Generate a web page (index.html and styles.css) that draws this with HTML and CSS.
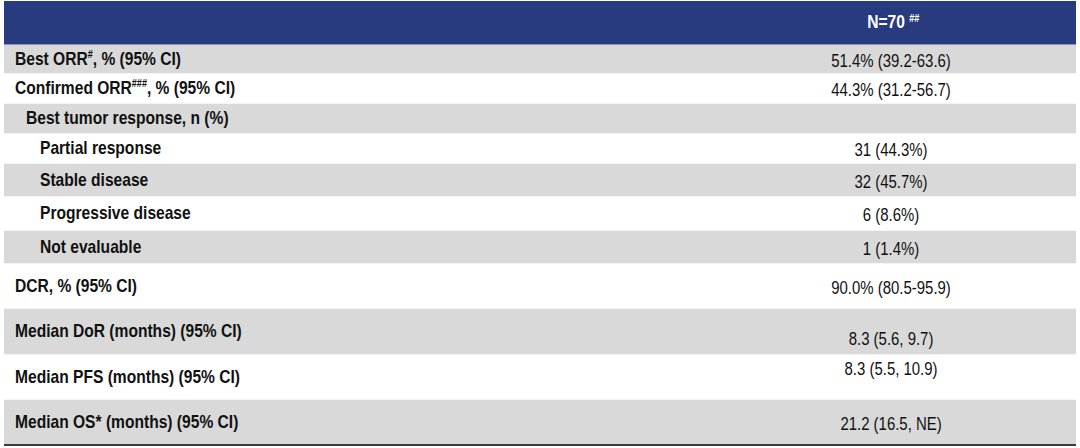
FILE: index.html
```html
<!DOCTYPE html>
<html lang="en">
<head>
<meta charset="utf-8">
<title>Efficacy table</title>
<link rel="stylesheet" href="styles.css">
</head>
<body>
<table class="efficacy">
  <colgroup><col class="col-label"><col class="col-value"></colgroup>
  <thead>
    <tr class="head"><th></th><th><span class="t">N=70 <sup>##</sup></span></th></tr>
  </thead>
  <tbody>
    <tr class="gray h29"><td class="lbl"><span class="t">Best ORR<sup>#</sup>, % (95% CI)</span></td><td class="val"><span class="t">51.4% (39.2-63.6)</span></td></tr>
    <tr class="h30"><td class="lbl"><span class="t">Confirmed ORR<sup>###</sup>, % (95% CI)</span></td><td class="val"><span class="t">44.3% (31.2-56.7)</span></td></tr>
    <tr class="gray h30"><td class="lbl ind1"><span class="t">Best tumor response, n (%)</span></td><td class="val"></td></tr>
    <tr class="h30"><td class="lbl ind2"><span class="t">Partial response</span></td><td class="val"><span class="t">31 (44.3%)</span></td></tr>
    <tr class="gray h33"><td class="lbl ind2"><span class="t">Stable disease</span></td><td class="val"><span class="t">32 (45.7%)</span></td></tr>
    <tr class="h34"><td class="lbl ind2"><span class="t">Progressive disease</span></td><td class="val"><span class="t">6 (8.6%)</span></td></tr>
    <tr class="gray h33"><td class="lbl ind2"><span class="t">Not evaluable</span></td><td class="val"><span class="t">1 (1.4%)</span></td></tr>
    <tr class="h45"><td class="lbl"><span class="t">DCR, % (95% CI)</span></td><td class="val"><span class="t">90.0% (80.5-95.9)</span></td></tr>
    <tr class="gray h46"><td class="lbl"><span class="t">Median DoR (months) (95% CI)</span></td><td class="val low"><span class="t">8.3 (5.6, 9.7)</span></td></tr>
    <tr class="h45"><td class="lbl"><span class="t">Median PFS (months) (95% CI)</span></td><td class="val high"><span class="t">8.3 (5.5, 10.9)</span></td></tr>
    <tr class="gray h44 last"><td class="lbl"><span class="t">Median OS* (months) (95% CI)</span></td><td class="val"><span class="t">21.2 (16.5, NE)</span></td></tr>
  </tbody>
</table>
</body>
</html>
```

FILE: styles.css
```css
html, body {
  margin: 0;
  padding: 0;
  background: #ffffff;
}

body {
  padding: 1px 4px 0 4px;
  font-family: "Liberation Sans", Arial, sans-serif;
  color: #111111;
}

.efficacy {
  width: 1072px;
  border-collapse: collapse;
  table-layout: fixed;
}

.col-label { width: 702px; }
.col-value { width: 370px; }

.t {
  display: inline-block;
  white-space: nowrap;
}

.head th {
  background: #283b7e;
  color: #ffffff;
  height: 43px;
  padding: 0;
  font-size: 19px;
  font-weight: bold;
  text-align: center;
  vertical-align: middle;
  border-bottom: 1px solid #8a93b8;
  box-sizing: border-box;
}

.head th .t {
  transform: scaleX(0.82);
  transform-origin: center;
  padding-left: 6px;
}

.head th sup {
  font-size: 11px;
  vertical-align: 6px;
  line-height: 0;
}

td {
  padding: 0;
  line-height: 20px;
  vertical-align: middle;
}

tr.gray td { background: #d9d9d9; }

tbody tr td { border-bottom: 1px solid #f4f4f4; box-sizing: border-box; }
tbody tr.last td { border-bottom: 2px solid #3a3a3a; }

.h29 td { height: 29px; }
.h30 td { height: 30px; }
.h33 td { height: 33px; }
.h34 td { height: 34px; }
.h44 td { height: 46px; }
.h45 td { height: 45px; }
.h46 td { height: 46px; }

.lbl {
  font-size: 19px;
  font-weight: bold;
  padding-left: 11px;
  text-align: left;
}

.lbl .t {
  transform: scaleX(0.82);
  transform-origin: left center;
}

.lbl sup {
  font-size: 11px;
  line-height: 0;
  vertical-align: 7px;
}

.lbl.ind1 { padding-left: 22px; }
.lbl.ind2 { padding-left: 36px; }

.val {
  font-size: 18px;
  text-align: center;
  padding-top: 4px;
}

.val .t {
  transform: scaleX(0.83);
  transform-origin: center;
}

.val.low { padding-top: 16px; }
.val.high { padding-top: 0; padding-bottom: 16px; }
```
